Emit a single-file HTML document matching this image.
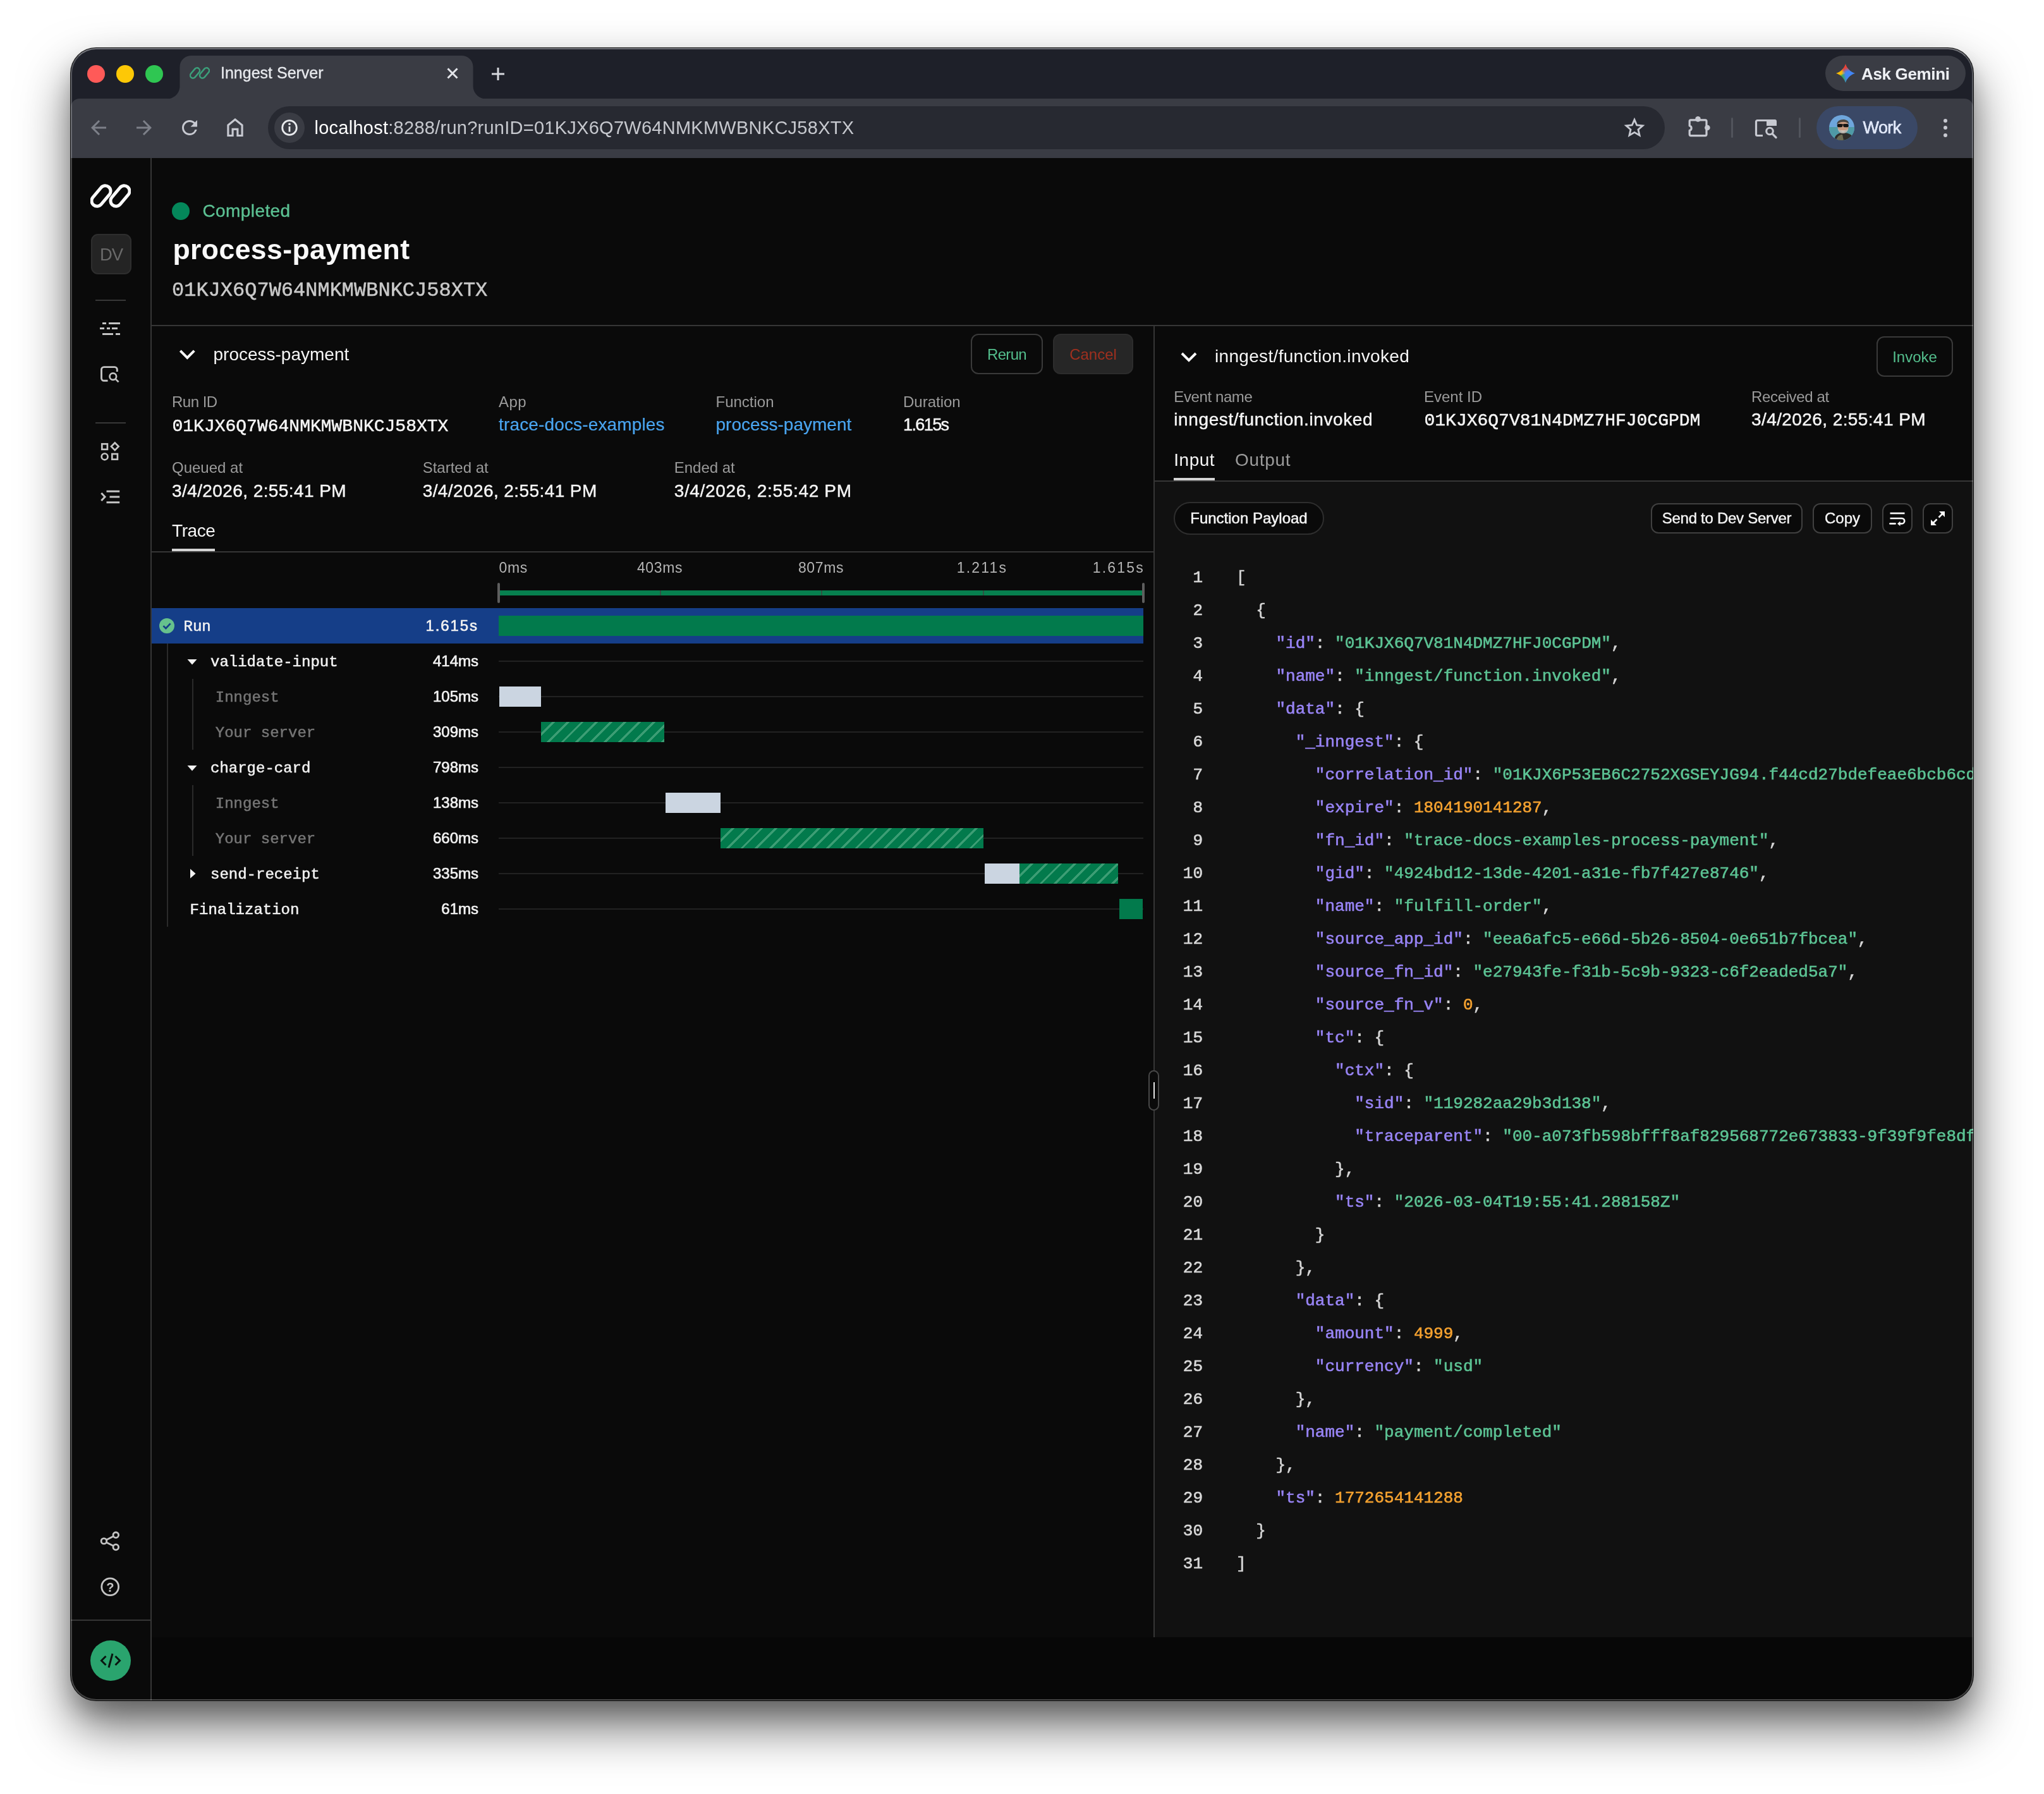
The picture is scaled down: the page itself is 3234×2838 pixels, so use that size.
<!DOCTYPE html>
<html lang="en"><head><meta charset="utf-8"><title>Inngest Server</title>
<style>
html,body{margin:0;padding:0}
body{width:3234px;height:2838px;background:#fff;position:relative;overflow:hidden}
#win{position:absolute;left:112px;top:76px;width:3010px;height:2614px;border-radius:40px;overflow:hidden;background:#0a0a0a;
box-shadow:0 0 0 1px rgba(0,0,0,.92),0 40px 80px 0 rgba(0,0,0,.6),0 20px 30px 0 rgba(0,0,0,.15);}
#pg{position:absolute;left:-112px;top:-76px;width:3234px;height:2838px;will-change:transform}
#rim{position:absolute;left:112px;top:76px;width:3010px;height:2614px;border-radius:40px;box-sizing:border-box;border:2px solid rgba(255,255,255,.25);border-top-color:rgba(255,255,255,.38);border-bottom-color:rgba(255,255,255,.24);pointer-events:none}
.k{color:#9884f5}.s{color:#5cc394}.n{color:#f5a230}.p{color:#d6d6d6}
</style></head><body>
<div id="win"><div id="pg">
<div style="position:absolute;left:112px;top:75px;width:3010px;height:176px;background:#1e2029;"></div>
<div style="position:absolute;left:112px;top:156px;width:3010px;height:94px;background:#3a3c44;border-radius:14px 14px 0 0;"></div>
<svg style="position:absolute;left:256px;top:84px" width="520" height="76" viewBox="256 84 520 76"><path d="M264 157 C275 156 284.5 148 284.5 136 V106 C284.5 95 293 88 303 88 H730 C740 88 748.5 95 748.5 106 V136 C748.5 148 758 156 769 157 V160 H264 Z" fill="#3a3c44"/></svg>
<div style="position:absolute;left:138px;top:103px;width:28px;height:28px;background:#ff5a58;border-radius:50%;"></div>
<div style="position:absolute;left:184px;top:103px;width:28px;height:28px;background:#fdc806;border-radius:50%;"></div>
<div style="position:absolute;left:230px;top:103px;width:28px;height:28px;background:#2fc652;border-radius:50%;"></div>
<svg style="position:absolute;left:300px;top:106px" width="32" height="19" viewBox="0 0 64 38"><g fill="none" stroke="#3c9f7a" stroke-width="5" stroke-linejoin="round"><path d="M3.98 21.13 L16.84 5.81 A8.6 8.6 0 0 1 30.02 16.87 L17.16 32.19 A8.6 8.6 0 0 1 3.98 21.13 Z"/><path d="M33.98 21.13 L46.84 5.81 A8.6 8.6 0 0 1 60.02 16.87 L47.16 32.19 A8.6 8.6 0 0 1 33.98 21.13 Z"/></g></svg>
<div style="position:absolute;left:349px;top:102.64px;font:400 25px/25px 'Liberation Sans', sans-serif;color:#e8eaee;white-space:pre;-webkit-text-stroke:.3px #e8eaee;">Inngest Server</div>
<svg style="position:absolute;left:706px;top:106px" width="20" height="20" viewBox="0 0 20 20"><path d="M2.5 2.5 L17.5 17.5 M17.5 2.5 L2.5 17.5" stroke="#e3e5ea" stroke-width="3"/></svg>
<svg style="position:absolute;left:776px;top:105px" width="24" height="24" viewBox="0 0 24 24"><path d="M12 2 V22 M2 12 H22" stroke="#d6d8de" stroke-width="3"/></svg>
<div style="position:absolute;left:2888px;top:88px;width:222px;height:56px;background:#3a3c44;border-radius:28px;"></div>
<div style="position:absolute;left:2905px;top:101px;width:30px;height:30px;background:radial-gradient(circle at 62% 52%,#4285f4 0 14%,rgba(66,133,244,0) 42%),conic-gradient(from 0deg,#ea4335 0deg,#ea4335 30deg,#4285f4 75deg,#4285f4 165deg,#34a853 205deg,#34a853 235deg,#fbbc04 262deg,#fbbc04 292deg,#ea4335 335deg);clip-path:path('M15 0 C17.400 7.400 22.600 12.600 30 15 C22.600 17.400 17.400 22.600 15 30 C12.600 22.600 7.400 17.400 0 15 C7.400 12.600 12.600 7.400 15 0 Z')"></div>
<div style="position:absolute;left:2945px;top:103.99px;font:700 26px/26px 'Liberation Sans', sans-serif;color:#eef0f4;white-space:pre;letter-spacing:-0.35px;">Ask Gemini</div>
<svg style="position:absolute;left:138px;top:184px;" width="36" height="36" viewBox="0 0 24 24"><path d="M20 11H7.83l5.59-5.59L12 4l-8 8 8 8 1.41-1.41L7.83 13H20v-2z" fill="#7d8089"/></svg>
<svg style="position:absolute;left:210px;top:184px;transform:scaleX(-1);" width="36" height="36" viewBox="0 0 24 24"><path d="M20 11H7.83l5.59-5.59L12 4l-8 8 8 8 1.41-1.41L7.83 13H20v-2z" fill="#7d8089"/></svg>
<svg style="position:absolute;left:282px;top:184px" width="36" height="36" viewBox="0 0 24 24"><path d="M17.65 6.35A7.958 7.958 0 0 0 12 4c-4.42 0-7.99 3.58-7.99 8s3.57 8 7.99 8c3.73 0 6.84-2.55 7.73-6h-2.08A5.99 5.99 0 0 1 12 18c-3.31 0-6-2.69-6-6s2.69-6 6-6c1.66 0 3.14.69 4.22 1.78L13 11h7V4l-2.35 2.35z" fill="#c7c9d1"/></svg>
<svg style="position:absolute;left:354px;top:183px" width="36" height="36" viewBox="0 0 24 24"><path d="M4.6 21 V10 L12 4 L19.4 10 V21 H14.6 V14.2 H9.4 V21 Z" stroke="#c7c9d1" stroke-width="2.1" fill="none"/></svg>
<div style="position:absolute;left:424px;top:168px;width:2210px;height:68px;background:#272931;border-radius:34px;"></div>
<div style="position:absolute;left:434px;top:178px;width:48px;height:48px;background:#3a3c44;border-radius:50%;"></div>
<svg style="position:absolute;left:442px;top:186px" width="32" height="32" viewBox="0 0 32 32"><circle cx="16" cy="16" r="11.3" stroke="#e8eaed" stroke-width="2.8" fill="none"/><rect x="14.6" y="14" width="2.8" height="8.5" fill="#e8eaed"/><circle cx="16" cy="10.3" r="1.8" fill="#e8eaed"/></svg>
<div style="position:absolute;left:497.5px;top:187.75px;font:400 29px/29px 'Liberation Sans', sans-serif;color:#c6c8ce;white-space:pre;letter-spacing:.26px"><span style="color:#ffffff">localhost</span>:8288/run?runID=01KJX6Q7W64NMKMWBNKCJ58XTX</div>
<svg style="position:absolute;left:2568px;top:184px" width="36" height="36" viewBox="0 0 24 24"><path d="M12 3.6 L14.5 9.3 L20.7 9.9 L16 14 L17.4 20.1 L12 16.9 L6.6 20.1 L8 14 L3.3 9.9 L9.5 9.3 Z" stroke="#c7c9d1" stroke-width="1.9" fill="none" stroke-linejoin="miter"/></svg>
<svg style="position:absolute;left:2669px;top:180px" width="40" height="40" viewBox="2669 180 40 40"><path d="M2673.200 199 V191.800 A2 2 0 0 1 2675.200 189.800 H2698 A2 2 0 0 1 2700 191.800 V212.600 A2 2 0 0 1 2698 214.600 H2675.200 A2 2 0 0 1 2673.200 212.600 V206.400 A3.800 3.800 0 0 0 2673.200 199 Z" stroke="#c7c9d1" stroke-width="3.200" fill="none" stroke-linejoin="round"/><circle cx="2686.500" cy="188.400" r="4.300" fill="#c7c9d1"/><circle cx="2701.400" cy="202" r="4.300" fill="#c7c9d1"/></svg>
<div style="position:absolute;left:2739px;top:186px;width:3px;height:32px;background:#51545c;border-radius:2px;"></div>
<svg style="position:absolute;left:2775px;top:186px" width="40" height="36" viewBox="0 0 40 36"><path d="M14 28.5 H5.5 A2 2 0 0 1 3.5 26.5 V6.5 A2 2 0 0 1 5.5 4.500 H34 " stroke="#c7c9d1" stroke-width="3.2" fill="none"/><path d="M20 3 H33 A3 3 0 0 1 36 6 V13 H20 Z" fill="#c7c9d1"/><circle cx="25" cy="21.500" r="5.300" stroke="#c7c9d1" stroke-width="3.100" fill="none"/><path d="M29.200 25.700 L35 31.500" stroke="#c7c9d1" stroke-width="3.300" stroke-linecap="round"/></svg>
<div style="position:absolute;left:2846px;top:186px;width:3px;height:32px;background:#51545c;border-radius:2px;"></div>
<div style="position:absolute;left:2874px;top:168px;width:160px;height:68px;background:#3a4866;border-radius:34px;"></div>
<svg style="position:absolute;left:2894px;top:182px" width="40" height="40" viewBox="0 0 40 40"><defs><clipPath id="av"><circle cx="20" cy="20" r="20"/></clipPath></defs><g clip-path="url(#av)"><rect width="40" height="40" fill="#6ea6dc"/><rect y="19" width="40" height="21" fill="#4f9aa6"/><path d="M8 40 C9 31 15 28 22 28 C31 28 38 31 40 40 Z" fill="#2e2d2a"/><path d="M11 40 C13 33 17 31 21 31 L23 40 Z" fill="#6b6a52"/><ellipse cx="22" cy="18.500" rx="8.600" ry="10.500" fill="#c79a80"/><path d="M12.500 15 C11.500 5 31.500 4 31.500 14.500 C28 9.500 17 9.500 12.500 15 Z" fill="#4a4640"/><path d="M13.600 21 C14.500 31.500 29.500 31.500 30.400 21 C27.500 25.500 17 25.500 13.600 21 Z" fill="#b9b4ad"/><path d="M17.500 24.200 C20 26 24 26 26.500 24.200 C24.500 25 19.500 25 17.500 24.200 Z" fill="#f4f1ec"/><rect x="12.800" y="14" width="8.400" height="5.200" rx="2" fill="#141414"/><rect x="22.400" y="14" width="8.400" height="5.200" rx="2" fill="#141414"/><rect x="20" y="14.600" width="4" height="1.600" fill="#141414"/></g></svg>
<div style="position:absolute;left:2947.5px;top:189.14px;font:400 27px/27px 'Liberation Sans', sans-serif;color:#e2e9fa;white-space:pre;letter-spacing:-0.6px;-webkit-text-stroke:.6px #e2e9fa;">Work</div>
<div style="position:absolute;left:3075px;top:188px;width:6px;height:6px;background:#c7c9d1;border-radius:50%;"></div>
<div style="position:absolute;left:3075px;top:199px;width:6px;height:6px;background:#c7c9d1;border-radius:50%;"></div>
<div style="position:absolute;left:3075px;top:210.5px;width:6px;height:6px;background:#c7c9d1;border-radius:50%;"></div>
<div style="position:absolute;left:112px;top:250px;width:3010px;height:2440px;background:#0a0a0a;"></div>
<div style="position:absolute;left:240px;top:2590px;width:2882px;height:100px;background:#070707;"></div>
<div style="position:absolute;left:238px;top:250px;width:2px;height:2440px;background:#363636;"></div>
<svg style="position:absolute;left:143px;top:291px" width="64" height="38" viewBox="0 0 64 38"><g fill="none" stroke="#fafafa" stroke-width="5" stroke-linejoin="round"><path d="M3.98 21.13 L16.84 5.81 A8.6 8.6 0 0 1 30.02 16.87 L17.16 32.19 A8.6 8.6 0 0 1 3.98 21.13 Z"/><path d="M33.98 21.13 L46.84 5.81 A8.6 8.6 0 0 1 60.02 16.87 L47.16 32.19 A8.6 8.6 0 0 1 33.98 21.13 Z"/></g></svg>
<div style="position:absolute;left:144px;top:370px;width:64px;height:64px;background:#242424;border-radius:11px;box-sizing:border-box;border:2px solid #2e2e2e;"></div>
<div style="position:absolute;left:158px;top:389.02px;font:400 27.5px/27.5px 'Liberation Sans', sans-serif;color:#6a6a6a;white-space:pre;letter-spacing:-1.2px;">DV</div>
<div style="position:absolute;left:151px;top:474px;width:48px;height:2px;background:#383838;"></div>
<div style="position:absolute;left:162.1px;top:509.7px;width:5.9px;height:3.1px;background:#c4c4c4;"></div>
<div style="position:absolute;left:171.5px;top:509.7px;width:18.2px;height:3.1px;background:#c4c4c4;"></div>
<div style="position:absolute;left:158.2px;top:518.4px;width:6.9px;height:3.1px;background:#c4c4c4;"></div>
<div style="position:absolute;left:168.6px;top:518.4px;width:5.4px;height:3.1px;background:#c4c4c4;"></div>
<div style="position:absolute;left:177.4px;top:518.4px;width:8.7px;height:3.1px;background:#c4c4c4;"></div>
<div style="position:absolute;left:162.1px;top:527.1px;width:17.2px;height:3.1px;background:#c4c4c4;"></div>
<div style="position:absolute;left:183.2px;top:527.1px;width:6.5px;height:3.1px;background:#c4c4c4;"></div>
<svg style="position:absolute;left:156px;top:576px" width="36" height="32" viewBox="156 576 36 32"><path d="M170.500 602.300 H164.500 A4 4 0 0 1 160.500 598.300 V584.600 A4 4 0 0 1 164.500 580.600 H181.300 A4 4 0 0 1 185.300 584.600 V588" stroke="#c4c4c4" stroke-width="2.9" fill="none"/><circle cx="178.800" cy="595.600" r="5.3" stroke="#c4c4c4" stroke-width="2.7" fill="none"/><path d="M182.800 599.600 L187.600 604.300" stroke="#c4c4c4" stroke-width="2.7"/></svg>
<div style="position:absolute;left:151px;top:668px;width:48px;height:2px;background:#383838;"></div>
<svg style="position:absolute;left:156px;top:698px" width="36" height="34" viewBox="156 698 36 34"><g stroke="#c4c4c4" stroke-width="2.7" fill="none"><rect x="161.300" y="702.300" width="8.6" height="8.6"/><path d="M181.800 700.500 L187.600 706.300 L181.800 712.100 L176 706.300 Z"/><circle cx="165.600" cy="722.400" r="4.9"/><rect x="177.300" y="718.100" width="8.600" height="8.600"/></g></svg>
<svg style="position:absolute;left:156px;top:772px" width="36" height="28" viewBox="156 772 36 28"><g stroke="#c4c4c4" stroke-width="3" fill="none"><path d="M168.500 777.300 H189.200 M173.500 786 H189.200 M168.500 794.700 H189.200"/><path d="M160.300 780 L166 786 L160.300 792"/></g></svg>
<svg style="position:absolute;left:156px;top:2420px" width="36" height="36" viewBox="156 2420 36 36"><g stroke="#c4c4c4" stroke-width="2.8" fill="none"><circle cx="164.400" cy="2437.900" r="4.300"/><circle cx="183.300" cy="2428.300" r="4.300"/><circle cx="183.300" cy="2447.500" r="4.300"/><path d="M168.300 2436 L179.500 2430.300 M168.300 2439.900 L179.500 2445.600"/></g></svg>
<svg style="position:absolute;left:156px;top:2492px" width="36" height="36" viewBox="156 2492 36 36"><circle cx="174.200" cy="2510.200" r="13.400" stroke="#c4c4c4" stroke-width="2.800" fill="none"/></svg>
<div style="position:absolute;left:168.3px;top:2500.67px;font:700 20px/20px 'Liberation Sans', sans-serif;color:#c4c4c4;white-space:pre;">?</div>
<div style="position:absolute;left:112px;top:2562px;width:126px;height:2px;background:#363636;"></div>
<div style="position:absolute;left:143px;top:2595px;width:64px;height:64px;background:#2aa46e;border-radius:50%;"></div>
<svg style="position:absolute;left:157px;top:2613px" width="36" height="28" viewBox="0 0 36 28"><g stroke="#0a140f" stroke-width="3" fill="none"><path d="M10.500 7 L3.500 14 L10.500 21"/><path d="M25.500 7 L32.500 14 L25.500 21"/><path d="M21 3 L15 25"/></g></svg>
<div style="position:absolute;left:272px;top:320px;width:28px;height:28px;background:#04875a;border-radius:50%;"></div>
<div style="position:absolute;left:320.5px;top:320.30px;font:400 28px/28px 'Liberation Sans', sans-serif;color:#5cc193;white-space:pre;letter-spacing:0.4px;-webkit-text-stroke:.35px #5cc193;">Completed</div>
<div style="position:absolute;left:273.5px;top:372.63px;font:700 44.5px/44.5px 'Liberation Sans', sans-serif;color:#fafafa;white-space:pre;letter-spacing:0.43px;">process-payment</div>
<div style="position:absolute;left:272px;top:444.47px;font:400 32px/32px 'Liberation Mono', monospace;color:#c9c9c9;white-space:pre;-webkit-text-stroke:.5px #c9c9c9;">01KJX6Q7W64NMKMWBNKCJ58XTX</div>
<div style="position:absolute;left:240px;top:514px;width:2882px;height:2px;background:#363636;"></div>
<svg style="position:absolute;left:280px;top:548px" width="32" height="24" viewBox="280 548 32 24"><path d="M285.300 554.800 L296.300 565.800 L307.300 554.800" stroke="#fafafa" stroke-width="4" fill="none"/></svg>
<div style="position:absolute;left:337.5px;top:546.60px;font:400 28px/28px 'Liberation Sans', sans-serif;color:#f5f5f5;white-space:pre;">process-payment</div>
<div style="position:absolute;left:1536px;top:528px;width:114px;height:64px;background:#0a0a0a;box-sizing:border-box;border:2px solid #3a3a3a;border-radius:12px;"></div>
<div style="position:absolute;left:1093px;width:1000px;text-align:center;top:548.68px;font:400 24px/24px 'Liberation Sans', sans-serif;color:#54bf8d;white-space:pre;letter-spacing:-0.7px;">Rerun</div>
<div style="position:absolute;left:1666px;top:528px;width:127px;height:64px;background:#262626;box-sizing:border-box;border:2px solid #2c2c2c;border-radius:12px;"></div>
<div style="position:absolute;left:1229.5px;width:1000px;text-align:center;top:548.68px;font:400 24px/24px 'Liberation Sans', sans-serif;color:#a0301f;white-space:pre;">Cancel</div>
<div style="position:absolute;left:272px;top:624.18px;font:400 24px/24px 'Liberation Sans', sans-serif;color:#9b9b9b;white-space:pre;letter-spacing:-0.5px;">Run ID</div>
<div style="position:absolute;left:272.5px;top:660.53px;font:400 28px/28px 'Liberation Mono', monospace;color:#f5f5f5;white-space:pre;-webkit-text-stroke:.5px #f5f5f5;">01KJX6Q7W64NMKMWBNKCJ58XTX</div>
<div style="position:absolute;left:789px;top:624.18px;font:400 24px/24px 'Liberation Sans', sans-serif;color:#9b9b9b;white-space:pre;letter-spacing:0.5px;">App</div>
<div style="position:absolute;left:789px;top:658.30px;font:400 28px/28px 'Liberation Sans', sans-serif;color:#4aa5f0;white-space:pre;letter-spacing:0.15px;-webkit-text-stroke:0.2px #4aa5f0;">trace-docs-examples</div>
<div style="position:absolute;left:1132.5px;top:624.18px;font:400 24px/24px 'Liberation Sans', sans-serif;color:#9b9b9b;white-space:pre;">Function</div>
<div style="position:absolute;left:1132.5px;top:658.30px;font:400 28px/28px 'Liberation Sans', sans-serif;color:#4aa5f0;white-space:pre;-webkit-text-stroke:0.2px #4aa5f0;">process-payment</div>
<div style="position:absolute;left:1429px;top:624.18px;font:400 24px/24px 'Liberation Sans', sans-serif;color:#9b9b9b;white-space:pre;">Duration</div>
<div style="position:absolute;left:1429px;top:659.14px;font:400 27px/27px 'Liberation Sans', sans-serif;color:#f5f5f5;white-space:pre;letter-spacing:-1.6px;-webkit-text-stroke:0.45px #f5f5f5;">1.615s</div>
<div style="position:absolute;left:272px;top:728.18px;font:400 24px/24px 'Liberation Sans', sans-serif;color:#9b9b9b;white-space:pre;">Queued at</div>
<div style="position:absolute;left:272px;top:762.80px;font:400 28px/28px 'Liberation Sans', sans-serif;color:#f5f5f5;white-space:pre;letter-spacing:0.41px;-webkit-text-stroke:0.45px #f5f5f5;">3/4/2026, 2:55:41 PM</div>
<div style="position:absolute;left:668.7px;top:728.18px;font:400 24px/24px 'Liberation Sans', sans-serif;color:#9b9b9b;white-space:pre;">Started at</div>
<div style="position:absolute;left:668.7px;top:762.80px;font:400 28px/28px 'Liberation Sans', sans-serif;color:#f5f5f5;white-space:pre;letter-spacing:0.41px;-webkit-text-stroke:0.45px #f5f5f5;">3/4/2026, 2:55:41 PM</div>
<div style="position:absolute;left:1066.7px;top:728.18px;font:400 24px/24px 'Liberation Sans', sans-serif;color:#9b9b9b;white-space:pre;">Ended at</div>
<div style="position:absolute;left:1066.7px;top:762.80px;font:400 28px/28px 'Liberation Sans', sans-serif;color:#f5f5f5;white-space:pre;letter-spacing:0.66px;-webkit-text-stroke:0.45px #f5f5f5;">3/4/2026, 2:55:42 PM</div>
<div style="position:absolute;left:272px;top:825.80px;font:400 28px/28px 'Liberation Sans', sans-serif;color:#f5f5f5;white-space:pre;letter-spacing:-0.4px;">Trace</div>
<div style="position:absolute;left:272px;top:868px;width:68px;height:4px;background:#d4d4d4;"></div>
<div style="position:absolute;left:240px;top:872px;width:1586px;height:2px;background:#363636;"></div>
<div style="position:absolute;left:1825px;top:516px;width:2px;height:2074px;background:#363636;"></div>
<div style="position:absolute;left:789.5px;top:886.53px;font:400 23px/23px 'Liberation Sans', sans-serif;color:#b4b4b4;white-space:pre;letter-spacing:0.6px;">0ms</div>
<div style="position:absolute;left:544px;width:1000px;text-align:center;top:886.53px;font:400 23px/23px 'Liberation Sans', sans-serif;color:#b4b4b4;white-space:pre;letter-spacing:0.6px;">403ms</div>
<div style="position:absolute;left:799px;width:1000px;text-align:center;top:886.53px;font:400 23px/23px 'Liberation Sans', sans-serif;color:#b4b4b4;white-space:pre;letter-spacing:0.6px;">807ms</div>
<div style="position:absolute;left:1054px;width:1000px;text-align:center;top:886.53px;font:400 23px/23px 'Liberation Sans', sans-serif;color:#b4b4b4;white-space:pre;letter-spacing:2.2px;">1.211s</div>
<div style="position:absolute;right:1423px;top:886.53px;font:400 23px/23px 'Liberation Sans', sans-serif;color:#b4b4b4;white-space:pre;letter-spacing:2.2px;">1.615s</div>
<div style="position:absolute;left:789px;top:934px;width:1020px;height:8px;background:#07804f;"></div>
<div style="position:absolute;left:1044px;top:934px;width:2px;height:8px;background:#2f5443;"></div>
<div style="position:absolute;left:1299px;top:934px;width:2px;height:8px;background:#2f5443;"></div>
<div style="position:absolute;left:1554.5px;top:934px;width:2px;height:8px;background:#2f5443;"></div>
<div style="position:absolute;left:787px;top:922px;width:4px;height:32px;background:#5e5e5e;border-radius:2px;"></div>
<div style="position:absolute;left:1807px;top:922px;width:4px;height:32px;background:#5e5e5e;border-radius:2px;"></div>
<div style="position:absolute;left:240px;top:962px;width:1569px;height:56px;background:#153e88;"></div>
<div style="position:absolute;left:789px;top:974px;width:1020px;height:32px;background:#027a4c;"></div>
<svg style="position:absolute;left:252px;top:978px" width="24" height="24" viewBox="0 0 24 24"><circle cx="12" cy="12" r="12" fill="#66c18d"/><path d="M6.400 12.100 L10.400 16 L17.600 8.300" stroke="#153f87" stroke-width="2.700" fill="none"/></svg>
<div style="position:absolute;left:290.5px;top:979.90px;font:400 24px/24px 'Liberation Mono', monospace;color:#f2f2f2;white-space:pre;-webkit-text-stroke:.5px #f2f2f2;">Run</div>
<div style="position:absolute;right:2477px;top:978.18px;font:400 24px/24px 'Liberation Sans', sans-serif;color:#f2f2f2;white-space:pre;letter-spacing:1.9px;-webkit-text-stroke:.65px #f2f2f2;">1.615s</div>
<div style="position:absolute;left:789px;top:1045px;width:1020px;height:2px;background:#222222;"></div>
<div style="position:absolute;left:333px;top:1035.90px;font:400 24px/24px 'Liberation Mono', monospace;color:#f2f2f2;white-space:pre;-webkit-text-stroke:.5px #f2f2f2;">validate-input</div>
<div style="position:absolute;right:2477px;top:1034.18px;font:400 24px/24px 'Liberation Sans', sans-serif;color:#f2f2f2;white-space:pre;-webkit-text-stroke:.65px #f2f2f2;">414ms</div>
<svg style="position:absolute;left:296px;top:1042.5px" width="16" height="9" viewBox="0 0 16 9"><path d="M0.500 0 H15.500 L8 8.500 Z" fill="#f2f2f2"/></svg>
<div style="position:absolute;left:789px;top:1101px;width:1020px;height:2px;background:#222222;"></div>
<div style="position:absolute;left:340.8px;top:1091.90px;font:400 24px/24px 'Liberation Mono', monospace;color:#767676;white-space:pre;-webkit-text-stroke:.5px #767676;">Inngest</div>
<div style="position:absolute;right:2477px;top:1090.18px;font:400 24px/24px 'Liberation Sans', sans-serif;color:#f2f2f2;white-space:pre;-webkit-text-stroke:.65px #f2f2f2;">105ms</div>
<div style="position:absolute;left:789.7px;top:1086px;width:66.2px;height:32px;background:#cbd5e1;"></div>
<div style="position:absolute;left:789px;top:1157px;width:1020px;height:2px;background:#222222;"></div>
<div style="position:absolute;left:340.8px;top:1147.90px;font:400 24px/24px 'Liberation Mono', monospace;color:#767676;white-space:pre;-webkit-text-stroke:.5px #767676;">Your server</div>
<div style="position:absolute;right:2477px;top:1146.18px;font:400 24px/24px 'Liberation Sans', sans-serif;color:#f2f2f2;white-space:pre;-webkit-text-stroke:.65px #f2f2f2;">309ms</div>
<div style="position:absolute;left:855.9px;top:1142px;width:195.2px;height:32px;background:#027a4c;background:repeating-linear-gradient(135deg,#027a4c 0 12.600px,#3c9d74 12.600px 16px);"></div>
<div style="position:absolute;left:789px;top:1213px;width:1020px;height:2px;background:#222222;"></div>
<div style="position:absolute;left:333px;top:1203.90px;font:400 24px/24px 'Liberation Mono', monospace;color:#f2f2f2;white-space:pre;-webkit-text-stroke:.5px #f2f2f2;">charge-card</div>
<div style="position:absolute;right:2477px;top:1202.18px;font:400 24px/24px 'Liberation Sans', sans-serif;color:#f2f2f2;white-space:pre;-webkit-text-stroke:.65px #f2f2f2;">798ms</div>
<svg style="position:absolute;left:296px;top:1210.5px" width="16" height="9" viewBox="0 0 16 9"><path d="M0.500 0 H15.500 L8 8.500 Z" fill="#f2f2f2"/></svg>
<div style="position:absolute;left:789px;top:1269px;width:1020px;height:2px;background:#222222;"></div>
<div style="position:absolute;left:340.8px;top:1259.90px;font:400 24px/24px 'Liberation Mono', monospace;color:#767676;white-space:pre;-webkit-text-stroke:.5px #767676;">Inngest</div>
<div style="position:absolute;right:2477px;top:1258.18px;font:400 24px/24px 'Liberation Sans', sans-serif;color:#f2f2f2;white-space:pre;-webkit-text-stroke:.65px #f2f2f2;">138ms</div>
<div style="position:absolute;left:1053.0px;top:1254px;width:87.2px;height:32px;background:#cbd5e1;"></div>
<div style="position:absolute;left:789px;top:1325px;width:1020px;height:2px;background:#222222;"></div>
<div style="position:absolute;left:340.8px;top:1315.90px;font:400 24px/24px 'Liberation Mono', monospace;color:#767676;white-space:pre;-webkit-text-stroke:.5px #767676;">Your server</div>
<div style="position:absolute;right:2477px;top:1314.18px;font:400 24px/24px 'Liberation Sans', sans-serif;color:#f2f2f2;white-space:pre;-webkit-text-stroke:.65px #f2f2f2;">660ms</div>
<div style="position:absolute;left:1140.2px;top:1310px;width:415.9px;height:32px;background:#027a4c;background:repeating-linear-gradient(135deg,#027a4c 0 12.600px,#3c9d74 12.600px 16px);"></div>
<div style="position:absolute;left:789px;top:1381px;width:1020px;height:2px;background:#222222;"></div>
<div style="position:absolute;left:333px;top:1371.90px;font:400 24px/24px 'Liberation Mono', monospace;color:#f2f2f2;white-space:pre;-webkit-text-stroke:.5px #f2f2f2;">send-receipt</div>
<div style="position:absolute;right:2477px;top:1370.18px;font:400 24px/24px 'Liberation Sans', sans-serif;color:#f2f2f2;white-space:pre;-webkit-text-stroke:.65px #f2f2f2;">335ms</div>
<svg style="position:absolute;left:301px;top:1374px" width="9" height="16" viewBox="0 0 9 16"><path d="M0 0.500 V15.500 L8.500 8 Z" fill="#f2f2f2"/></svg>
<div style="position:absolute;left:1557.6px;top:1366px;width:55.6px;height:32px;background:#cbd5e1;"></div>
<div style="position:absolute;left:1613.2px;top:1366px;width:156.0px;height:32px;background:#027a4c;background:repeating-linear-gradient(135deg,#027a4c 0 12.600px,#3c9d74 12.600px 16px);"></div>
<div style="position:absolute;left:789px;top:1437px;width:1020px;height:2px;background:#222222;"></div>
<div style="position:absolute;left:300.6px;top:1427.90px;font:400 24px/24px 'Liberation Mono', monospace;color:#f2f2f2;white-space:pre;-webkit-text-stroke:.5px #f2f2f2;">Finalization</div>
<div style="position:absolute;right:2477px;top:1426.18px;font:400 24px/24px 'Liberation Sans', sans-serif;color:#f2f2f2;white-space:pre;-webkit-text-stroke:.65px #f2f2f2;">61ms</div>
<div style="position:absolute;left:1770.5px;top:1422px;width:37.6px;height:32px;background:#027a4c;"></div>
<div style="position:absolute;left:264px;top:1018px;width:2px;height:448px;background:#2a2a2a;"></div>
<div style="position:absolute;left:304px;top:1074px;width:2px;height:112px;background:#2a2a2a;"></div>
<div style="position:absolute;left:304px;top:1242px;width:2px;height:112px;background:#2a2a2a;"></div>
<div style="position:absolute;left:1827px;top:762px;width:1295px;height:1828px;background:#111111;"></div>
<div style="position:absolute;left:1827px;top:760px;width:1295px;height:2px;background:#363636;"></div>
<svg style="position:absolute;left:1864px;top:552px" width="32" height="24" viewBox="1864 552 32 24"><path d="M1870 559 L1881 570 L1892 559" stroke="#fafafa" stroke-width="4" fill="none"/></svg>
<div style="position:absolute;left:1922px;top:549.80px;font:400 28px/28px 'Liberation Sans', sans-serif;color:#f5f5f5;white-space:pre;letter-spacing:0.32px;">inngest/function.invoked</div>
<div style="position:absolute;left:2969px;top:532px;width:121px;height:64px;background:#0a0a0a;box-sizing:border-box;border:2px solid #3a3a3a;border-radius:12px;"></div>
<div style="position:absolute;left:2529.5px;width:1000px;text-align:center;top:552.68px;font:400 24px/24px 'Liberation Sans', sans-serif;color:#54bf8d;white-space:pre;">Invoke</div>
<div style="position:absolute;left:1857.3px;top:615.68px;font:400 24px/24px 'Liberation Sans', sans-serif;color:#9b9b9b;white-space:pre;letter-spacing:-0.4px;">Event name</div>
<div style="position:absolute;left:1857.3px;top:649.70px;font:400 28px/28px 'Liberation Sans', sans-serif;color:#f5f5f5;white-space:pre;letter-spacing:0.6px;-webkit-text-stroke:0.45px #f5f5f5;">inngest/function.invoked</div>
<div style="position:absolute;left:2253px;top:615.68px;font:400 24px/24px 'Liberation Sans', sans-serif;color:#9b9b9b;white-space:pre;">Event ID</div>
<div style="position:absolute;left:2253.5px;top:651.93px;font:400 28px/28px 'Liberation Mono', monospace;color:#f5f5f5;white-space:pre;-webkit-text-stroke:.5px #f5f5f5;">01KJX6Q7V81N4DMZ7HFJ0CGPDM</div>
<div style="position:absolute;left:2771px;top:615.68px;font:400 24px/24px 'Liberation Sans', sans-serif;color:#9b9b9b;white-space:pre;letter-spacing:-0.35px;">Received at</div>
<div style="position:absolute;left:2771px;top:649.70px;font:400 28px/28px 'Liberation Sans', sans-serif;color:#f5f5f5;white-space:pre;letter-spacing:0.41px;-webkit-text-stroke:0.45px #f5f5f5;">3/4/2026, 2:55:41 PM</div>
<div style="position:absolute;left:1857.3px;top:713.90px;font:400 28px/28px 'Liberation Sans', sans-serif;color:#f5f5f5;white-space:pre;letter-spacing:0.5px;">Input</div>
<div style="position:absolute;left:1954px;top:713.90px;font:400 28px/28px 'Liberation Sans', sans-serif;color:#9b9b9b;white-space:pre;letter-spacing:0.7px;">Output</div>
<div style="position:absolute;left:1857px;top:756px;width:65px;height:4px;background:#d4d4d4;"></div>
<div style="position:absolute;left:1857px;top:794px;width:238px;height:52px;background:#0a0a0a;box-sizing:border-box;border:2px solid #2e2e2e;border-radius:26px;"></div>
<div style="position:absolute;left:1476px;width:1000px;text-align:center;top:808.18px;font:400 24px/24px 'Liberation Sans', sans-serif;color:#f5f5f5;white-space:pre;-webkit-text-stroke:.5px #f5f5f5;">Function Payload</div>
<div style="position:absolute;left:2612px;top:796px;width:240px;height:48px;background:#0a0a0a;box-sizing:border-box;border:2px solid #404040;border-radius:12px;"></div>
<div style="position:absolute;left:2232.0px;width:1000px;text-align:center;top:808.18px;font:400 24px/24px 'Liberation Sans', sans-serif;color:#f5f5f5;white-space:pre;letter-spacing:-0.28px;-webkit-text-stroke:.4px #f5f5f5;">Send to Dev Server</div>
<div style="position:absolute;left:2868px;top:796px;width:94px;height:48px;background:#0a0a0a;box-sizing:border-box;border:2px solid #404040;border-radius:12px;"></div>
<div style="position:absolute;left:2415.0px;width:1000px;text-align:center;top:808.18px;font:400 24px/24px 'Liberation Sans', sans-serif;color:#f5f5f5;white-space:pre;-webkit-text-stroke:.4px #f5f5f5;">Copy</div>
<div style="position:absolute;left:2978px;top:796px;width:48px;height:48px;background:#0a0a0a;box-sizing:border-box;border:2px solid #404040;border-radius:12px;"></div>
<div style="position:absolute;left:3042px;top:796px;width:48px;height:48px;background:#0a0a0a;box-sizing:border-box;border:2px solid #404040;border-radius:12px;"></div>
<svg style="position:absolute;left:2988px;top:806px" width="28" height="28" viewBox="0 0 28 28"><g stroke="#fafafa" stroke-width="2.700" fill="none"><path d="M2.500 6 H25.500"/><path d="M2.500 14 H21 A4.200 4.200 0 0 1 21 22.400 H16.500"/><path d="M2.500 22.400 H10.500" stroke-linecap="round"/></g><path d="M18.500 18.600 V26.200 L14 22.400 Z" fill="#fafafa"/></svg>
<svg style="position:absolute;left:3052px;top:806px" width="28" height="28" viewBox="0 0 28 28"><g stroke="#fafafa" stroke-width="2.700" fill="none"><path d="M15.500 12.500 L24 4"/><path d="M12.500 15.500 L4 24"/></g><path d="M16 3 H25 V12 Z" fill="#fafafa"/><path d="M3 16 V25 H12 Z" fill="#fafafa"/></svg>
<div style="position:absolute;left:1840px;top:888px;width:63px;text-align:right;color:#d9d9d9;font:400 26px/52px 'Liberation Mono', monospace;-webkit-text-stroke:.6px currentColor;"><div>1</div><div>2</div><div>3</div><div>4</div><div>5</div><div>6</div><div>7</div><div>8</div><div>9</div><div>10</div><div>11</div><div>12</div><div>13</div><div>14</div><div>15</div><div>16</div><div>17</div><div>18</div><div>19</div><div>20</div><div>21</div><div>22</div><div>23</div><div>24</div><div>25</div><div>26</div><div>27</div><div>28</div><div>29</div><div>30</div><div>31</div></div>
<div style="position:absolute;left:1956px;top:888px;width:1170px;overflow:hidden;white-space:pre;color:#d6d6d6;font:400 26px/52px 'Liberation Mono', monospace;-webkit-text-stroke:.6px currentColor;"><div><span class="p">[</span></div><div>  <span class="p">{</span></div><div>    <span class="k">&quot;id&quot;</span><span class="p">: </span><span class="s">&quot;01KJX6Q7V81N4DMZ7HFJ0CGPDM&quot;</span><span class="p">,</span></div><div>    <span class="k">&quot;name&quot;</span><span class="p">: </span><span class="s">&quot;inngest/function.invoked&quot;</span><span class="p">,</span></div><div>    <span class="k">&quot;data&quot;</span><span class="p">: {</span></div><div>      <span class="k">&quot;_inngest&quot;</span><span class="p">: {</span></div><div>        <span class="k">&quot;correlation_id&quot;</span><span class="p">: </span><span class="s">&quot;01KJX6P53EB6C2752XGSEYJG94.f44cd27bdefeae6bcb6cd4a9e1c07b5f2d38&quot;</span><span class="p">,</span></div><div>        <span class="k">&quot;expire&quot;</span><span class="p">: </span><span class="n">1804190141287</span><span class="p">,</span></div><div>        <span class="k">&quot;fn_id&quot;</span><span class="p">: </span><span class="s">&quot;trace-docs-examples-process-payment&quot;</span><span class="p">,</span></div><div>        <span class="k">&quot;gid&quot;</span><span class="p">: </span><span class="s">&quot;4924bd12-13de-4201-a31e-fb7f427e8746&quot;</span><span class="p">,</span></div><div>        <span class="k">&quot;name&quot;</span><span class="p">: </span><span class="s">&quot;fulfill-order&quot;</span><span class="p">,</span></div><div>        <span class="k">&quot;source_app_id&quot;</span><span class="p">: </span><span class="s">&quot;eea6afc5-e66d-5b26-8504-0e651b7fbcea&quot;</span><span class="p">,</span></div><div>        <span class="k">&quot;source_fn_id&quot;</span><span class="p">: </span><span class="s">&quot;e27943fe-f31b-5c9b-9323-c6f2eaded5a7&quot;</span><span class="p">,</span></div><div>        <span class="k">&quot;source_fn_v&quot;</span><span class="p">: </span><span class="n">0</span><span class="p">,</span></div><div>        <span class="k">&quot;tc&quot;</span><span class="p">: {</span></div><div>          <span class="k">&quot;ctx&quot;</span><span class="p">: {</span></div><div>            <span class="k">&quot;sid&quot;</span><span class="p">: </span><span class="s">&quot;119282aa29b3d138&quot;</span><span class="p">,</span></div><div>            <span class="k">&quot;traceparent&quot;</span><span class="p">: </span><span class="s">&quot;00-a073fb598bfff8af829568772e673833-9f39f9fe8df1a2c4-01&quot;</span><span class="p">,</span></div><div>          <span class="p">},</span></div><div>          <span class="k">&quot;ts&quot;</span><span class="p">: </span><span class="s">&quot;2026-03-04T19:55:41.288158Z&quot;</span></div><div>        <span class="p">}</span></div><div>      <span class="p">},</span></div><div>      <span class="k">&quot;data&quot;</span><span class="p">: {</span></div><div>        <span class="k">&quot;amount&quot;</span><span class="p">: </span><span class="n">4999</span><span class="p">,</span></div><div>        <span class="k">&quot;currency&quot;</span><span class="p">: </span><span class="s">&quot;usd&quot;</span></div><div>      <span class="p">},</span></div><div>      <span class="k">&quot;name&quot;</span><span class="p">: </span><span class="s">&quot;payment/completed&quot;</span></div><div>    <span class="p">},</span></div><div>    <span class="k">&quot;ts&quot;</span><span class="p">: </span><span class="n">1772654141288</span></div><div>  <span class="p">}</span></div><div><span class="p">]</span></div></div>
<div style="position:absolute;left:1817px;top:1693px;width:17px;height:64px;background:#0a0a0a;box-sizing:border-box;border:2px solid #474747;border-radius:9px;"></div>
<div style="position:absolute;left:1824.5px;top:1712px;width:2.5px;height:26px;background:#e5e5e5;"></div>
</div></div>
<div id="rim"></div>
</body></html>
